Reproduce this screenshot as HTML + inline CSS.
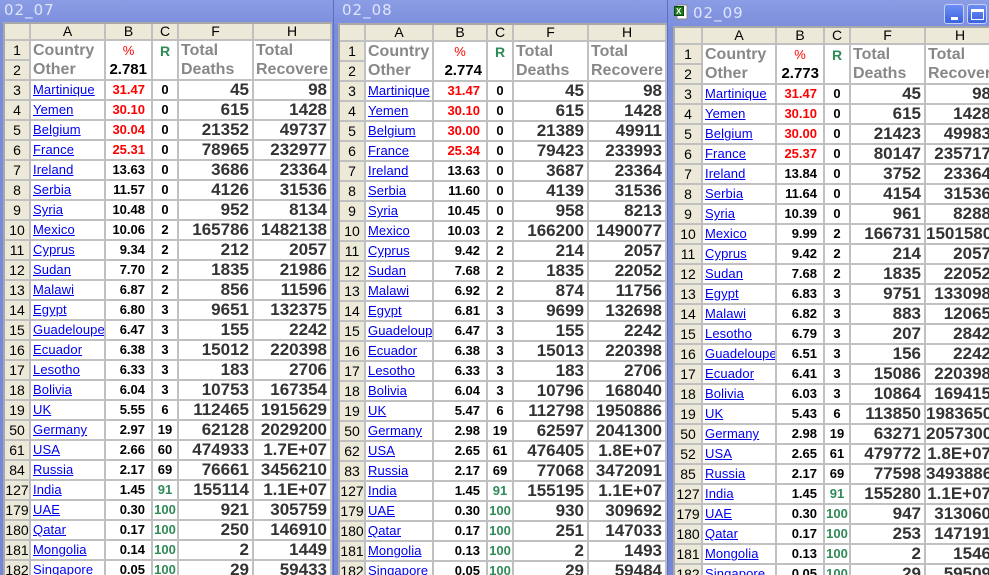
<!DOCTYPE html>
<html><head><meta charset="utf-8">
<style>
*{margin:0;padding:0;box-sizing:border-box}
body{width:989px;height:575px;overflow:hidden;background:#7b8fdc;font-family:"Liberation Sans",Arial,sans-serif;position:relative}
.win{position:absolute;top:0;height:575px;background:linear-gradient(#8b9de4,#7a8cdc 30px,#7386d8);border-left:1px solid #5a6ec8;overflow:hidden}
.ttl{position:absolute;color:#dfe5fb;font-size:15px;letter-spacing:1px;font-family:"DejaVu Sans",sans-serif}
table{position:absolute;border-collapse:separate;border-spacing:0;table-layout:fixed;background:#fff;border-left:2px solid #a8a8a8;border-top:2px solid #a8a8a8}
td{height:20px;border-right:2px solid #c0c0c0;border-bottom:2px solid #c0c0c0;padding:0;white-space:nowrap;overflow:hidden;line-height:18px}
tr.h td{height:17px;background:#ece9d8;text-align:center;font-size:14px;color:#000;line-height:15px}
td.r{background:#ece9d8;text-align:center;font-size:14px;color:#000}
td.a{padding-left:2px}
td.a u{color:#0000ee;font-size:13px;letter-spacing:.1px}
td.b{text-align:right;padding-right:6px;font-weight:bold;font-size:13px}
td.c{text-align:center;font-weight:bold;font-size:13px}
td.n{text-align:right;padding-right:3px;font-weight:bold;font-size:17px;color:#333}
.red{color:#f00}.g{color:#2e8b57}
tr.t1 td:not(.r){border-bottom:none}
td.lab{color:#888;font-weight:bold;font-size:16px;padding-left:2px}
</style></head><body>

<div class="win" style="left:0;width:333px;border-left:none">
<div class="ttl" style="left:4px;top:1px">02_07</div>
<table style="left:3px;top:22px;width:327px">
<colgroup><col style="width:26px"><col style="width:75px"><col style="width:47px"><col style="width:26px"><col style="width:75px"><col style="width:78px"></colgroup>
<tr class="h"><td>&nbsp;</td><td>A</td><td>B</td><td>C</td><td>F</td><td>H</td></tr>
<tr class="t1"><td class="r">1</td><td class="lab">Country</td><td class="c red" style="font-weight:normal;font-size:13px">%</td><td class="c g" style="font-size:14px">R</td><td class="lab">Total</td><td class="lab">Total</td></tr>
<tr><td class="r">2</td><td class="lab">Other</td><td class="b" style="font-size:15px;padding-right:4px">2.781</td><td></td><td class="lab">Deaths</td><td class="lab">Recovere</td></tr>
<tr><td class="r">3</td><td class="a"><u>Martinique</u></td><td class="b red">31.47</td><td class="c">0</td><td class="n">45</td><td class="n">98</td></tr>
<tr><td class="r">4</td><td class="a"><u>Yemen</u></td><td class="b red">30.10</td><td class="c">0</td><td class="n">615</td><td class="n">1428</td></tr>
<tr><td class="r">5</td><td class="a"><u>Belgium</u></td><td class="b red">30.04</td><td class="c">0</td><td class="n">21352</td><td class="n">49737</td></tr>
<tr><td class="r">6</td><td class="a"><u>France</u></td><td class="b red">25.31</td><td class="c">0</td><td class="n">78965</td><td class="n">232977</td></tr>
<tr><td class="r">7</td><td class="a"><u>Ireland</u></td><td class="b">13.63</td><td class="c">0</td><td class="n">3686</td><td class="n">23364</td></tr>
<tr><td class="r">8</td><td class="a"><u>Serbia</u></td><td class="b">11.57</td><td class="c">0</td><td class="n">4126</td><td class="n">31536</td></tr>
<tr><td class="r">9</td><td class="a"><u>Syria</u></td><td class="b">10.48</td><td class="c">0</td><td class="n">952</td><td class="n">8134</td></tr>
<tr><td class="r">10</td><td class="a"><u>Mexico</u></td><td class="b">10.06</td><td class="c">2</td><td class="n">165786</td><td class="n">1482138</td></tr>
<tr><td class="r">11</td><td class="a"><u>Cyprus</u></td><td class="b">9.34</td><td class="c">2</td><td class="n">212</td><td class="n">2057</td></tr>
<tr><td class="r">12</td><td class="a"><u>Sudan</u></td><td class="b">7.70</td><td class="c">2</td><td class="n">1835</td><td class="n">21986</td></tr>
<tr><td class="r">13</td><td class="a"><u>Malawi</u></td><td class="b">6.87</td><td class="c">2</td><td class="n">856</td><td class="n">11596</td></tr>
<tr><td class="r">14</td><td class="a"><u>Egypt</u></td><td class="b">6.80</td><td class="c">3</td><td class="n">9651</td><td class="n">132375</td></tr>
<tr><td class="r">15</td><td class="a"><u>Guadeloupe</u></td><td class="b">6.47</td><td class="c">3</td><td class="n">155</td><td class="n">2242</td></tr>
<tr><td class="r">16</td><td class="a"><u>Ecuador</u></td><td class="b">6.38</td><td class="c">3</td><td class="n">15012</td><td class="n">220398</td></tr>
<tr><td class="r">17</td><td class="a"><u>Lesotho</u></td><td class="b">6.33</td><td class="c">3</td><td class="n">183</td><td class="n">2706</td></tr>
<tr><td class="r">18</td><td class="a"><u>Bolivia</u></td><td class="b">6.04</td><td class="c">3</td><td class="n">10753</td><td class="n">167354</td></tr>
<tr><td class="r">19</td><td class="a"><u>UK</u></td><td class="b">5.55</td><td class="c">6</td><td class="n">112465</td><td class="n">1915629</td></tr>
<tr><td class="r">50</td><td class="a"><u>Germany</u></td><td class="b">2.97</td><td class="c">19</td><td class="n">62128</td><td class="n">2029200</td></tr>
<tr><td class="r">61</td><td class="a"><u>USA</u></td><td class="b">2.66</td><td class="c">60</td><td class="n">474933</td><td class="n">1.7E+07</td></tr>
<tr><td class="r">84</td><td class="a"><u>Russia</u></td><td class="b">2.17</td><td class="c">69</td><td class="n">76661</td><td class="n">3456210</td></tr>
<tr><td class="r">127</td><td class="a"><u>India</u></td><td class="b">1.45</td><td class="c g">91</td><td class="n">155114</td><td class="n">1.1E+07</td></tr>
<tr><td class="r">179</td><td class="a"><u>UAE</u></td><td class="b">0.30</td><td class="c g">100</td><td class="n">921</td><td class="n">305759</td></tr>
<tr><td class="r">180</td><td class="a"><u>Qatar</u></td><td class="b">0.17</td><td class="c g">100</td><td class="n">250</td><td class="n">146910</td></tr>
<tr><td class="r">181</td><td class="a"><u>Mongolia</u></td><td class="b">0.14</td><td class="c g">100</td><td class="n">2</td><td class="n">1449</td></tr>
<tr><td class="r">182</td><td class="a"><u>Singapore</u></td><td class="b">0.05</td><td class="c g">100</td><td class="n">29</td><td class="n">59433</td></tr>
</table>
</div>

<div class="win" style="left:333px;width:334px">
<div class="ttl" style="left:8px;top:1px">02_08</div>
<table style="left:4px;top:23px;width:327px">
<colgroup><col style="width:26px"><col style="width:68px"><col style="width:54px"><col style="width:26px"><col style="width:75px"><col style="width:78px"></colgroup>
<tr class="h"><td>&nbsp;</td><td>A</td><td>B</td><td>C</td><td>F</td><td>H</td></tr>
<tr class="t1"><td class="r">1</td><td class="lab">Country</td><td class="c red" style="font-weight:normal;font-size:13px">%</td><td class="c g" style="font-size:14px">R</td><td class="lab">Total</td><td class="lab">Total</td></tr>
<tr><td class="r">2</td><td class="lab">Other</td><td class="b" style="font-size:15px;padding-right:4px">2.774</td><td></td><td class="lab">Deaths</td><td class="lab">Recovere</td></tr>
<tr><td class="r">3</td><td class="a"><u>Martinique</u></td><td class="b red">31.47</td><td class="c">0</td><td class="n">45</td><td class="n">98</td></tr>
<tr><td class="r">4</td><td class="a"><u>Yemen</u></td><td class="b red">30.10</td><td class="c">0</td><td class="n">615</td><td class="n">1428</td></tr>
<tr><td class="r">5</td><td class="a"><u>Belgium</u></td><td class="b red">30.00</td><td class="c">0</td><td class="n">21389</td><td class="n">49911</td></tr>
<tr><td class="r">6</td><td class="a"><u>France</u></td><td class="b red">25.34</td><td class="c">0</td><td class="n">79423</td><td class="n">233993</td></tr>
<tr><td class="r">7</td><td class="a"><u>Ireland</u></td><td class="b">13.63</td><td class="c">0</td><td class="n">3687</td><td class="n">23364</td></tr>
<tr><td class="r">8</td><td class="a"><u>Serbia</u></td><td class="b">11.60</td><td class="c">0</td><td class="n">4139</td><td class="n">31536</td></tr>
<tr><td class="r">9</td><td class="a"><u>Syria</u></td><td class="b">10.45</td><td class="c">0</td><td class="n">958</td><td class="n">8213</td></tr>
<tr><td class="r">10</td><td class="a"><u>Mexico</u></td><td class="b">10.03</td><td class="c">2</td><td class="n">166200</td><td class="n">1490077</td></tr>
<tr><td class="r">11</td><td class="a"><u>Cyprus</u></td><td class="b">9.42</td><td class="c">2</td><td class="n">214</td><td class="n">2057</td></tr>
<tr><td class="r">12</td><td class="a"><u>Sudan</u></td><td class="b">7.68</td><td class="c">2</td><td class="n">1835</td><td class="n">22052</td></tr>
<tr><td class="r">13</td><td class="a"><u>Malawi</u></td><td class="b">6.92</td><td class="c">2</td><td class="n">874</td><td class="n">11756</td></tr>
<tr><td class="r">14</td><td class="a"><u>Egypt</u></td><td class="b">6.81</td><td class="c">3</td><td class="n">9699</td><td class="n">132698</td></tr>
<tr><td class="r">15</td><td class="a"><u>Guadeloupe</u></td><td class="b">6.47</td><td class="c">3</td><td class="n">155</td><td class="n">2242</td></tr>
<tr><td class="r">16</td><td class="a"><u>Ecuador</u></td><td class="b">6.38</td><td class="c">3</td><td class="n">15013</td><td class="n">220398</td></tr>
<tr><td class="r">17</td><td class="a"><u>Lesotho</u></td><td class="b">6.33</td><td class="c">3</td><td class="n">183</td><td class="n">2706</td></tr>
<tr><td class="r">18</td><td class="a"><u>Bolivia</u></td><td class="b">6.04</td><td class="c">3</td><td class="n">10796</td><td class="n">168040</td></tr>
<tr><td class="r">19</td><td class="a"><u>UK</u></td><td class="b">5.47</td><td class="c">6</td><td class="n">112798</td><td class="n">1950886</td></tr>
<tr><td class="r">50</td><td class="a"><u>Germany</u></td><td class="b">2.98</td><td class="c">19</td><td class="n">62597</td><td class="n">2041300</td></tr>
<tr><td class="r">62</td><td class="a"><u>USA</u></td><td class="b">2.65</td><td class="c">61</td><td class="n">476405</td><td class="n">1.8E+07</td></tr>
<tr><td class="r">83</td><td class="a"><u>Russia</u></td><td class="b">2.17</td><td class="c">69</td><td class="n">77068</td><td class="n">3472091</td></tr>
<tr><td class="r">127</td><td class="a"><u>India</u></td><td class="b">1.45</td><td class="c g">91</td><td class="n">155195</td><td class="n">1.1E+07</td></tr>
<tr><td class="r">179</td><td class="a"><u>UAE</u></td><td class="b">0.30</td><td class="c g">100</td><td class="n">930</td><td class="n">309692</td></tr>
<tr><td class="r">180</td><td class="a"><u>Qatar</u></td><td class="b">0.17</td><td class="c g">100</td><td class="n">251</td><td class="n">147033</td></tr>
<tr><td class="r">181</td><td class="a"><u>Mongolia</u></td><td class="b">0.13</td><td class="c g">100</td><td class="n">2</td><td class="n">1493</td></tr>
<tr><td class="r">182</td><td class="a"><u>Singapore</u></td><td class="b">0.05</td><td class="c g">100</td><td class="n">29</td><td class="n">59484</td></tr>
</table>
</div>

<div class="win" style="left:667px;width:322px">
<svg style="position:absolute;left:6px;top:4px" width="14" height="16" viewBox="0 0 14 16"><rect x="3" y="1" width="10" height="14" fill="#fff" stroke="#888"/><rect x="0.5" y="2.5" width="9" height="9" fill="#1e7a1e" stroke="#0a4a0a"/><text x="2" y="10" font-size="8" fill="#fff" font-family="Liberation Sans" font-weight="bold">X</text></svg>
<div class="ttl" style="left:25px;top:4px">02_09</div>
<div style="position:absolute;left:276px;top:4px;width:20px;height:20px;border-radius:3px;background:linear-gradient(#6d8ef5,#3b62e0);border:1px solid #c6d2f8"><div style="position:absolute;left:6px;top:12px;width:7px;height:3px;background:#fff"></div></div>
<div style="position:absolute;left:299px;top:4px;width:20px;height:20px;border-radius:3px;background:linear-gradient(#6d8ef5,#3b62e0);border:1px solid #c6d2f8"><div style="position:absolute;left:3px;top:4px;width:13px;height:11px;border:1px solid #fff;border-top:3px solid #fff"></div></div>
<table style="left:5px;top:26px;width:321px">
<colgroup><col style="width:28px"><col style="width:74px"><col style="width:48px"><col style="width:26px"><col style="width:75px"><col style="width:70px"></colgroup>
<tr class="h"><td>&nbsp;</td><td>A</td><td>B</td><td>C</td><td>F</td><td>H</td></tr>
<tr class="t1"><td class="r">1</td><td class="lab">Country</td><td class="c red" style="font-weight:normal;font-size:13px">%</td><td class="c g" style="font-size:14px">R</td><td class="lab">Total</td><td class="lab">Total</td></tr>
<tr><td class="r">2</td><td class="lab">Other</td><td class="b" style="font-size:15px;padding-right:4px">2.773</td><td></td><td class="lab">Deaths</td><td class="lab">Recovered</td></tr>
<tr><td class="r">3</td><td class="a"><u>Martinique</u></td><td class="b red">31.47</td><td class="c">0</td><td class="n">45</td><td class="n">98</td></tr>
<tr><td class="r">4</td><td class="a"><u>Yemen</u></td><td class="b red">30.10</td><td class="c">0</td><td class="n">615</td><td class="n">1428</td></tr>
<tr><td class="r">5</td><td class="a"><u>Belgium</u></td><td class="b red">30.00</td><td class="c">0</td><td class="n">21423</td><td class="n">49983</td></tr>
<tr><td class="r">6</td><td class="a"><u>France</u></td><td class="b red">25.37</td><td class="c">0</td><td class="n">80147</td><td class="n">235717</td></tr>
<tr><td class="r">7</td><td class="a"><u>Ireland</u></td><td class="b">13.84</td><td class="c">0</td><td class="n">3752</td><td class="n">23364</td></tr>
<tr><td class="r">8</td><td class="a"><u>Serbia</u></td><td class="b">11.64</td><td class="c">0</td><td class="n">4154</td><td class="n">31536</td></tr>
<tr><td class="r">9</td><td class="a"><u>Syria</u></td><td class="b">10.39</td><td class="c">0</td><td class="n">961</td><td class="n">8288</td></tr>
<tr><td class="r">10</td><td class="a"><u>Mexico</u></td><td class="b">9.99</td><td class="c">2</td><td class="n">166731</td><td class="n">1501580</td></tr>
<tr><td class="r">11</td><td class="a"><u>Cyprus</u></td><td class="b">9.42</td><td class="c">2</td><td class="n">214</td><td class="n">2057</td></tr>
<tr><td class="r">12</td><td class="a"><u>Sudan</u></td><td class="b">7.68</td><td class="c">2</td><td class="n">1835</td><td class="n">22052</td></tr>
<tr><td class="r">13</td><td class="a"><u>Egypt</u></td><td class="b">6.83</td><td class="c">3</td><td class="n">9751</td><td class="n">133098</td></tr>
<tr><td class="r">14</td><td class="a"><u>Malawi</u></td><td class="b">6.82</td><td class="c">3</td><td class="n">883</td><td class="n">12065</td></tr>
<tr><td class="r">15</td><td class="a"><u>Lesotho</u></td><td class="b">6.79</td><td class="c">3</td><td class="n">207</td><td class="n">2842</td></tr>
<tr><td class="r">16</td><td class="a"><u>Guadeloupe</u></td><td class="b">6.51</td><td class="c">3</td><td class="n">156</td><td class="n">2242</td></tr>
<tr><td class="r">17</td><td class="a"><u>Ecuador</u></td><td class="b">6.41</td><td class="c">3</td><td class="n">15086</td><td class="n">220398</td></tr>
<tr><td class="r">18</td><td class="a"><u>Bolivia</u></td><td class="b">6.03</td><td class="c">3</td><td class="n">10864</td><td class="n">169415</td></tr>
<tr><td class="r">19</td><td class="a"><u>UK</u></td><td class="b">5.43</td><td class="c">6</td><td class="n">113850</td><td class="n">1983650</td></tr>
<tr><td class="r">50</td><td class="a"><u>Germany</u></td><td class="b">2.98</td><td class="c">19</td><td class="n">63271</td><td class="n">2057300</td></tr>
<tr><td class="r">52</td><td class="a"><u>USA</u></td><td class="b">2.65</td><td class="c">61</td><td class="n">479772</td><td class="n">1.8E+07</td></tr>
<tr><td class="r">85</td><td class="a"><u>Russia</u></td><td class="b">2.17</td><td class="c">69</td><td class="n">77598</td><td class="n">3493886</td></tr>
<tr><td class="r">127</td><td class="a"><u>India</u></td><td class="b">1.45</td><td class="c g">91</td><td class="n">155280</td><td class="n">1.1E+07</td></tr>
<tr><td class="r">179</td><td class="a"><u>UAE</u></td><td class="b">0.30</td><td class="c g">100</td><td class="n">947</td><td class="n">313060</td></tr>
<tr><td class="r">180</td><td class="a"><u>Qatar</u></td><td class="b">0.17</td><td class="c g">100</td><td class="n">253</td><td class="n">147191</td></tr>
<tr><td class="r">181</td><td class="a"><u>Mongolia</u></td><td class="b">0.13</td><td class="c g">100</td><td class="n">2</td><td class="n">1546</td></tr>
<tr><td class="r">182</td><td class="a"><u>Singapore</u></td><td class="b">0.05</td><td class="c g">100</td><td class="n">29</td><td class="n">59509</td></tr>
</table>
</div>
</body></html>
